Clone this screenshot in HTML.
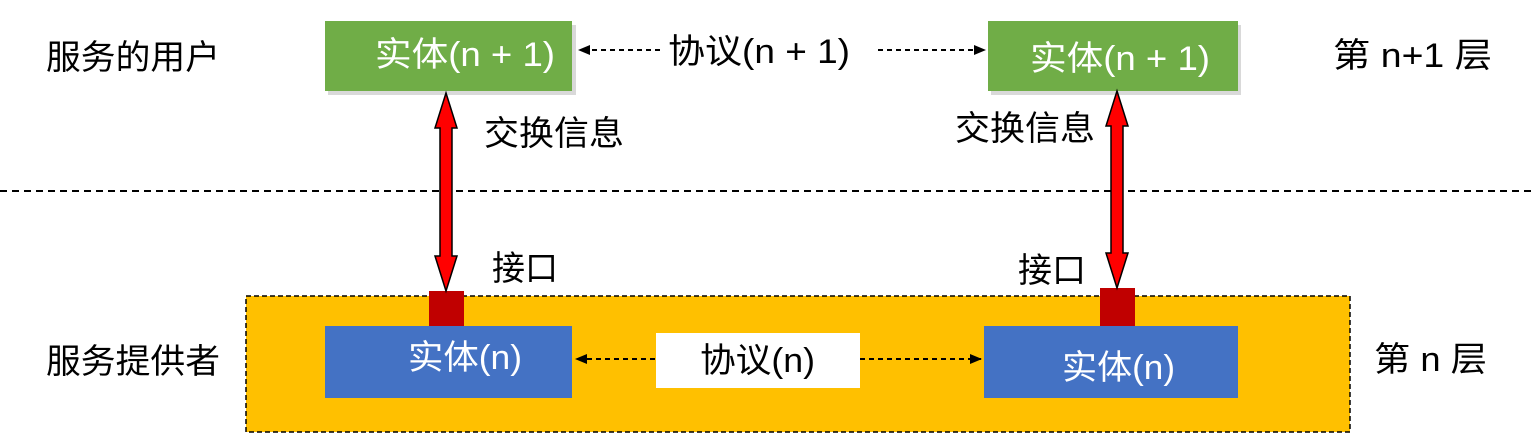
<!DOCTYPE html>
<html><head><meta charset="utf-8"><style>
html,body{margin:0;padding:0;background:#fff;}
svg{display:block}
text{font-family:"Liberation Sans","Noto Sans CJK SC",sans-serif;}
</style></head><body>
<svg width="1536" height="446" viewBox="0 0 1536 446" xmlns="http://www.w3.org/2000/svg">
<defs>
<marker id="ah" markerWidth="12" markerHeight="10" refX="11" refY="5" orient="auto" markerUnits="userSpaceOnUse">
<path d="M0,0 L12,5 L0,10 Z" fill="#000"/>
</marker>
</defs>
<line x1="0" y1="191" x2="1536" y2="191" stroke="#000" stroke-width="2" stroke-dasharray="7,5"/>
<rect x="246" y="296" width="1104" height="136" fill="#FFC000" stroke="#000" stroke-width="1.5" stroke-dasharray="5,3"/>
<rect x="328" y="25" width="248" height="70" fill="#d9d9d9"/>
<rect x="325" y="21" width="247" height="70" fill="#70AD47"/>
<rect x="991" y="25" width="250" height="70" fill="#d9d9d9"/>
<rect x="988" y="21" width="250" height="70" fill="#70AD47"/>
<rect x="325" y="326" width="247" height="72" fill="#4472C4"/>
<rect x="984" y="326" width="254" height="72" fill="#4472C4"/>
<rect x="429" y="291" width="35" height="35" fill="#C00000"/>
<rect x="1100" y="288" width="35" height="38" fill="#C00000"/>
<rect x="656" y="333" width="204" height="55" fill="#fff"/>
<path d="M446,93 L457,128 L452,128 L452,256 L457,256 L446,291 L435,256 L440,256 L440,128 L435,128 Z" fill="#FF0000" stroke="#000" stroke-width="1.5"/>
<path d="M1117,91 L1128,126 L1123,126 L1123,253 L1128,253 L1117,288 L1106,253 L1111,253 L1111,126 L1106,126 Z" fill="#FF0000" stroke="#000" stroke-width="1.5"/>
<line x1="660" y1="50" x2="579" y2="50" stroke="#000" stroke-width="2" stroke-dasharray="5,4" marker-end="url(#ah)"/>
<line x1="878" y1="50" x2="985" y2="50" stroke="#000" stroke-width="2" stroke-dasharray="5,4" marker-end="url(#ah)"/>
<line x1="655" y1="359" x2="576" y2="359" stroke="#000" stroke-width="2" stroke-dasharray="5,4" marker-end="url(#ah)"/>
<line x1="860" y1="359" x2="981" y2="359" stroke="#000" stroke-width="2" stroke-dasharray="5,4" marker-end="url(#ah)"/>
<g font-size="34" fill="#000">
<text x="46" y="69" textLength="174" lengthAdjust="spacingAndGlyphs">服务的用户</text>
<text x="46" y="373" textLength="174" lengthAdjust="spacingAndGlyphs">服务提供者</text>
<text x="668" y="63" textLength="182" lengthAdjust="spacingAndGlyphs">协议(n + 1)</text>
<text x="484" y="145" textLength="140" lengthAdjust="spacingAndGlyphs">交换信息</text>
<text x="955" y="140" textLength="140" lengthAdjust="spacingAndGlyphs">交换信息</text>
<text x="492" y="280" textLength="66" lengthAdjust="spacingAndGlyphs">接口</text>
<text x="1018" y="282" textLength="68" lengthAdjust="spacingAndGlyphs">接口</text>
<text x="700" y="372" textLength="115" lengthAdjust="spacingAndGlyphs">协议(n)</text>
<text x="1333" y="67" textLength="159" lengthAdjust="spacingAndGlyphs">第 n+1 层</text>
<text x="1374" y="371" textLength="113" lengthAdjust="spacingAndGlyphs">第 n 层</text>
</g>
<g font-size="34" fill="#fff">
<text x="375" y="66" textLength="180" lengthAdjust="spacingAndGlyphs">实体(n + 1)</text>
<text x="1030" y="70" textLength="180" lengthAdjust="spacingAndGlyphs">实体(n + 1)</text>
<text x="408" y="369" textLength="114" lengthAdjust="spacingAndGlyphs">实体(n)</text>
<text x="1062" y="379" textLength="113" lengthAdjust="spacingAndGlyphs">实体(n)</text>
</g>
</svg>
</body></html>
